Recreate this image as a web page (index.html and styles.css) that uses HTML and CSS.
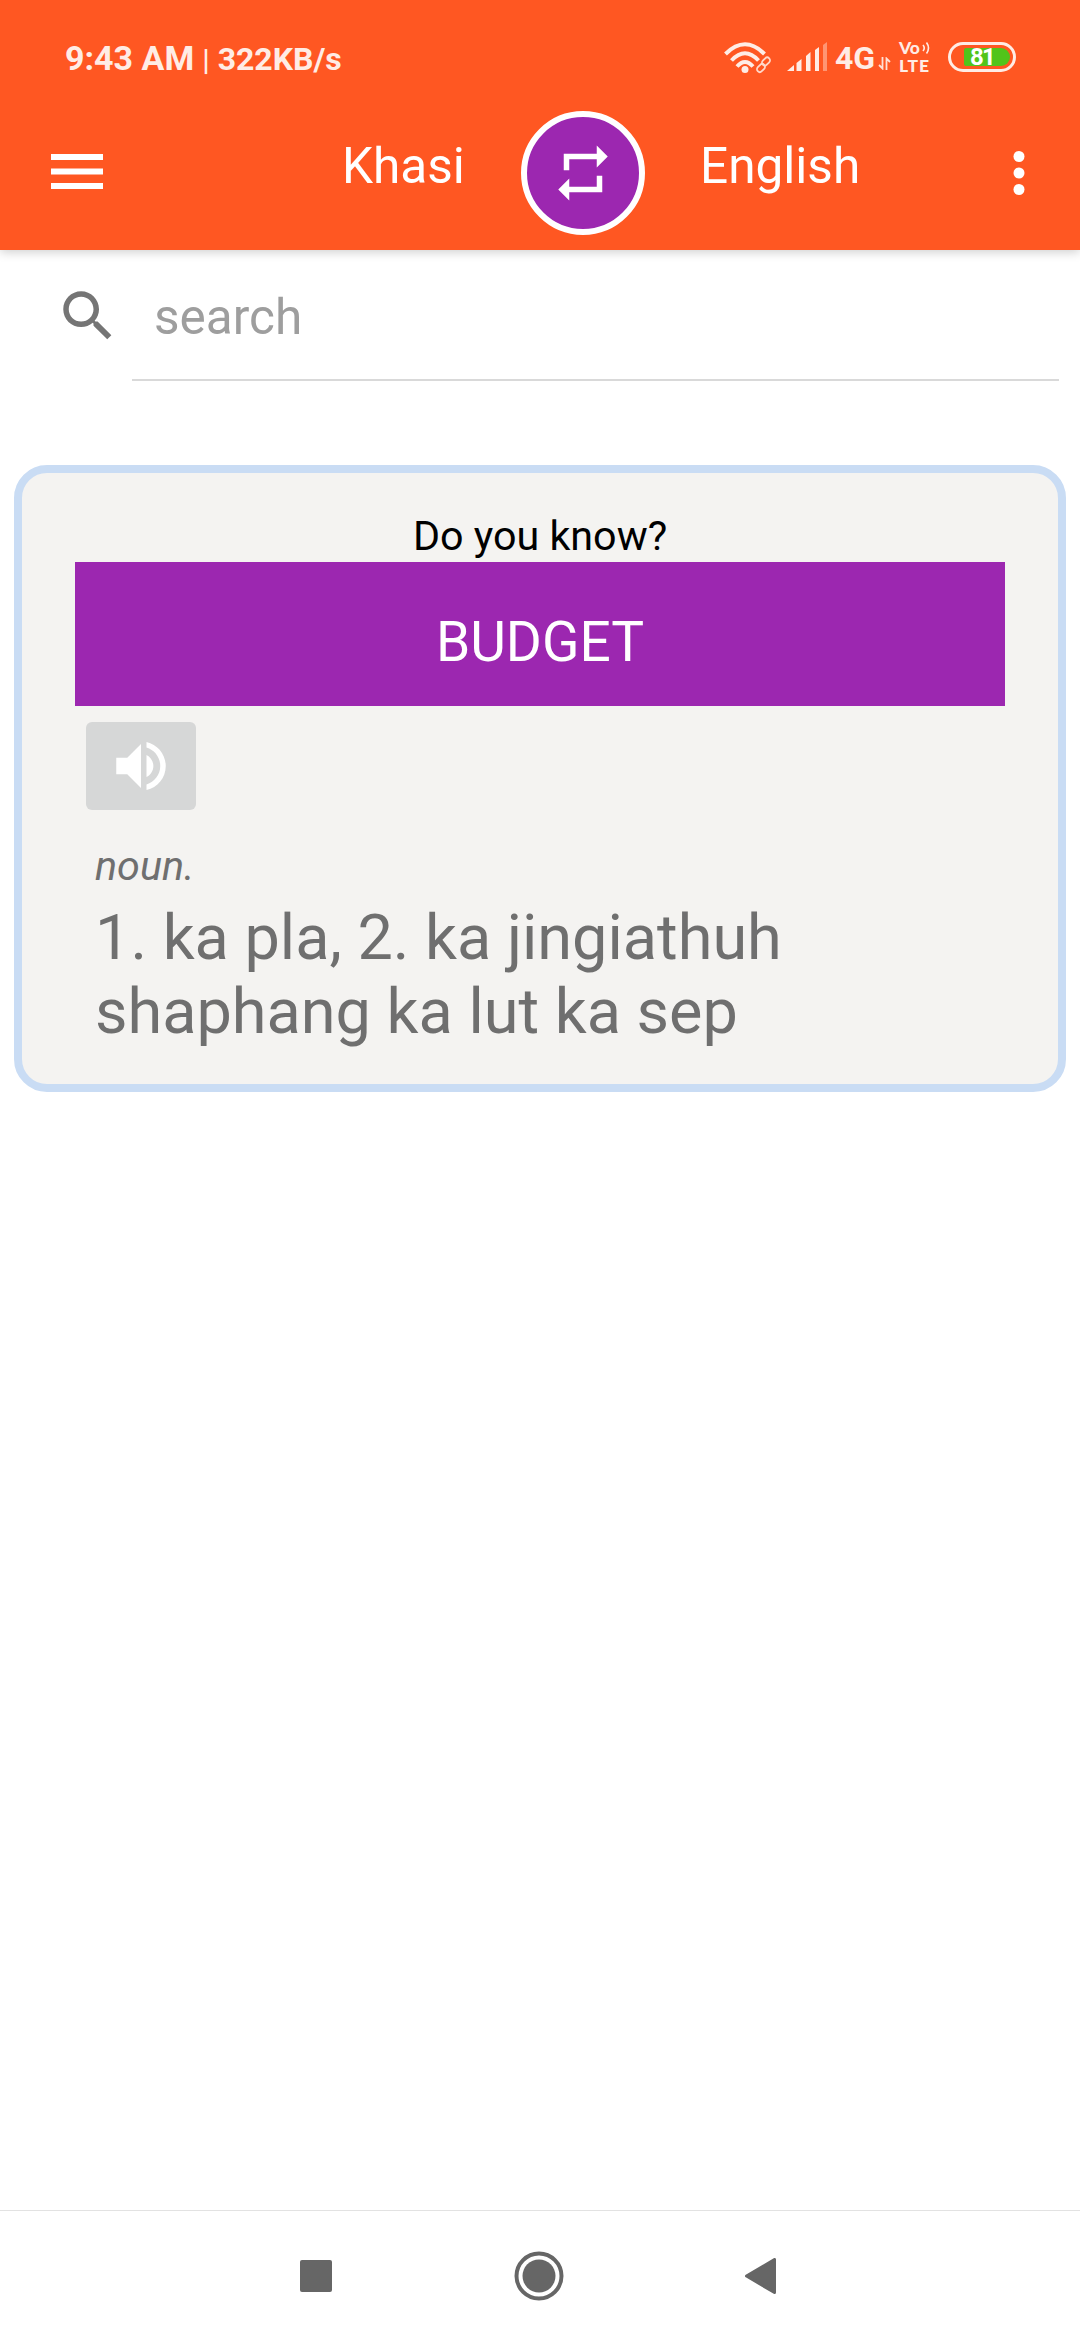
FILE: index.html
```html
<!DOCTYPE html>
<html lang="en">
<head>
<meta charset="utf-8">
<title>Khasi English Dictionary</title>
<link rel="stylesheet" href="styles.css">
</head>
<body>
<header class="header">
  <div class="status">
    <div class="status-left"><span class="clock">9:43 AM</span><span class="bar">|</span><span class="speed">322KB/s</span></div>
    <div class="status-right">
      <svg class="wifi" viewBox="0 0 48 32" width="48" height="32" fill="none">
        <g stroke="#ffece5" stroke-width="4">
          <path d="M1.5 12Q21 -7.500 40.500 12"/>
          <path d="M7.5 18.500Q21 4 34.500 18.500"/>
          <path d="M13 24.500Q21 15.500 29 24.500"/>
        </g>
        <circle cx="21" cy="27.500" r="3.500" fill="#ffece5"/>
        <g stroke="#ffd8ca" stroke-width="1.800">
          <rect x="-4.500" y="-2.800" width="9" height="5.600" rx="2.800" transform="translate(42 19.500) rotate(-45)"/>
          <rect x="-4.500" y="-2.800" width="9" height="5.600" rx="2.800" transform="translate(37 26) rotate(-45)"/>
        </g>
      </svg>
      <svg class="signal" viewBox="0 0 40 30" width="40" height="30" fill="#ffece5">
        <path d="M0 29L7 23V29Z"/><path d="M9.500 21L14.500 17V29H9.500Z"/><path d="M19 14L23.500 10V29H19Z"/><path d="M28 8L32 5V29H28Z"/><path opacity=".42" d="M36 3L40 0V29H36Z"/>
      </svg>
      <span class="net">4G</span>
      <svg class="updown" viewBox="0 0 13 13" width="13" height="13" fill="none" stroke="#ffe0d5" stroke-width="1.800"><path d="M4.500 0V11.500L1 8M8.500 13V1.500L12 5"/></svg>
      <div class="volte">
        <div class="vo">Vo<svg viewBox="0 0 8 14" width="8" height="14" fill="none" stroke="#ffece5" stroke-width="1.600"><path d="M1 4Q3.500 7 1 10M4.500 1.500Q8.500 7 4.500 12.500"/></svg></div>
        <div class="lte">LTE</div>
      </div>
      <div class="battery"><div class="charge">81</div></div>
    </div>
  </div>
  <nav class="toolbar">
    <svg class="menu" viewBox="0 0 52 35" width="52" height="35" fill="#fff"><path d="M0 0H52V6H0ZM0 14.500H52V20.500H0ZM0 29H52V35H0Z"/></svg>
    <span class="lang from">Khasi</span>
    <button class="swap"><svg viewBox="0 0 24 24" width="66" height="66" fill="#fff"><path d="M7 7h10v3l4-4-4-4v3H5v6h2V7zm10 10H7v-3l-4 4 4 4v-3h12v-6h-2v4z"/></svg></button>
    <span class="lang to">English</span>
    <svg class="more" viewBox="0 0 12 46" width="12" height="46" fill="#fff"><circle cx="6" cy="6.500" r="5.500"/><circle cx="6" cy="23" r="5.500"/><circle cx="6" cy="39.500" r="5.500"/></svg>
  </nav>
</header>
<main class="main">
  <div class="search">
    <svg class="glass" viewBox="0 0 24 24" width="66" height="66" fill="#757575"><path d="M15.500 14h-.79l-.28-.27C15.410 12.590 16 11.110 16 9.500 16 5.910 13.090 3 9.500 3S3 5.910 3 9.500 5.910 16 9.500 16c1.610 0 3.090-.59 4.230-1.570l.27.28v.79l5 4.990L20.490 19l-4.990-5zm-6 0C7.010 14 5 11.990 5 9.500S7.010 5 9.500 5 14 7.010 14 9.500 11.990 14 9.500 14z"/></svg>
    <div class="field">search</div>
  </div>
  <section class="card">
    <div class="hint">Do you know?</div>
    <div class="word">BUDGET</div>
    <button class="speak"><svg viewBox="0 0 24 24" width="66" height="66" fill="#fff"><path d="M3 9v6h4l5 5V4L7 9H3zm13.500 3c0-1.770-1.020-3.290-2.500-4.030v8.050c1.480-.73 2.500-2.250 2.500-4.020zM14 3.230v2.060c2.890.86 5 3.540 5 6.710s-2.110 5.850-5 6.710v2.060c4.010-.91 7-4.490 7-8.770s-2.990-7.860-7-8.770z"/></svg></button>
    <div class="pos">noun.</div>
    <div class="meaning">1. ka pla, 2. ka jingiathuh shaphang ka lut ka sep</div>
  </section>
</main>
<footer class="navbar">
  <svg viewBox="0 0 32 32" width="32" height="32" fill="#666"><rect width="32" height="32" rx="2"/></svg>
  <svg viewBox="0 0 50 50" width="50" height="50"><circle cx="25" cy="25" r="22.500" fill="none" stroke="#666" stroke-width="4"/><circle cx="25" cy="25" r="16.500" fill="#666"/></svg>
  <svg viewBox="0 0 31 36" width="31" height="36" fill="#666" stroke="#666" stroke-width="3" stroke-linejoin="round"><path d="M29.500 1.500V34.500L1.500 18Z"/></svg>
</footer>
</body>
</html>
```
FILE: styles.css
```css
* { box-sizing: border-box; }
body { margin: 0; width: 1080px; height: 2340px; display: flex; flex-direction: column; background: #fff; font-family: Roboto, "Noto Sans", sans-serif; }
svg { display: block; flex: none; }
button { border: 0; padding: 0; display: flex; align-items: center; justify-content: center; }
.header { height: 250px; background: #ff5722; box-shadow: 0 2px 10px rgba(0, 0, 0, .2); color: #fff; }
.status { height: 96px; display: flex; justify-content: space-between; padding: 0 64px 0 65px; color: #ffece5; font-weight: 700; }
.status-left { display: flex; align-items: baseline; padding-top: 38px; line-height: 40px; white-space: pre; }
.clock { font-size: 34px; }
.bar { font-size: 30px; font-weight: 500; margin: 0 8px; }
.speed { font-size: 32px; }
.status-right { display: flex; align-items: flex-start; }
.wifi { margin: 42px 15px 0 0; }
.signal { margin: 42px 8px 0 0; }
.net { font-size: 32px; line-height: 38px; padding-top: 39px; width: 43px; }
.updown { margin: 57px 8px 0 0; }
.volte { width: 49px; padding-top: 39px; font-family: Lato, sans-serif; font-weight: 900; font-size: 17.5px; line-height: 18px; }
.vo { display: flex; gap: 2px; align-items: center; }
.lte { letter-spacing: .9px; }
.battery { width: 68px; height: 30px; margin-top: 42px; border: 3px solid #ffece5; border-radius: 15px; padding: 3px 3px 3px 13px; }
.charge { height: 18px; background: #52c41a; border-radius: 2px 9px 9px 2px; font-size: 24px; line-height: 18px; letter-spacing: -1.8px; padding-left: 6px; color: #fff; }
.toolbar { height: 154px; display: flex; align-items: flex-start; }
.menu { margin: 58px 0 0 51px; }
.lang { font-size: 49.500px; line-height: 58px; margin-top: 41px; }
.from { margin-left: 239px; width: 179px; }
.swap { width: 124px; height: 124px; margin-top: 15px; border: 6px solid #fff; border-radius: 50%; background: #9c27b0; }
.to { margin-left: 55px; width: 313px; }
.more { margin-top: 54px; }
.main { flex: 1; }
.search { height: 131px; display: flex; padding: 0 21px 0 55px; }
.glass { margin: 33px 11px 0 0; }
.field { flex: 1; height: 131px; border-bottom: 2px solid #d9d9d9; padding: 38px 0 0 22px; font-size: 49.500px; line-height: 58px; color: #9e9e9e; }
.card { margin: 84px 14px 0; height: 627px; border: 8px solid #c9dcf4; border-radius: 33px; background: #f4f3f1; padding: 38px 53px 0; }
.hint { height: 51px; font-size: 41.250px; line-height: 51px; text-align: center; color: #000; }
.word { height: 144px; background: #9c27b0; color: #fff; font-size: 55px; line-height: 64px; padding-top: 48px; text-align: center; }
.speak { width: 110px; height: 88px; margin: 16px 0 0 11px; background: #d6d7d7; border-radius: 6px; }
.pos { margin: 33px 0 0 20px; font-size: 41.250px; line-height: 46px; font-style: italic; color: #6f6f6f; }
.meaning { margin: 12px 0 0 20px; width: 800px; font-size: 63px; line-height: 74px; color: #6f6f6f; }
.navbar { height: 130px; border-top: 1px solid #e2e2e2; display: flex; align-items: center; justify-content: space-between; padding: 0 304px 0 300px; }
```
